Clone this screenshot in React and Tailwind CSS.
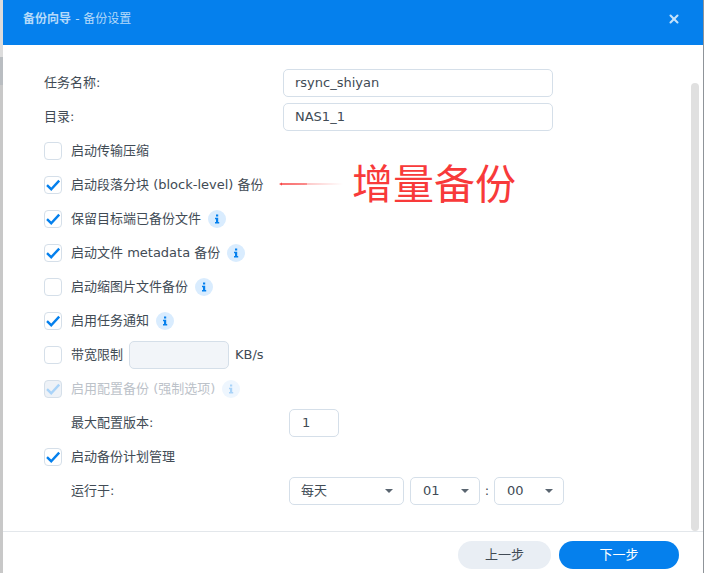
import { X } from 'lucide-react';

const FONT = { fontFamily: '"DejaVu Sans", "Noto Sans CJK SC", sans-serif' };

function Box({ checked, disabled }) {
  return (
    <span className={`flex h-[18px] w-[18px] shrink-0 items-center justify-center rounded-[4px] border ${disabled ? 'border-[#d5dfe9] bg-[#eef2f7]' : 'border-[#d5dfe9] bg-white'}`}>
      {checked && (
        <svg viewBox="0 0 16 16" className="h-[16px] w-[16px]">
          <path d="M2 8.2 6.2 12.2 14.2 3.6" fill="none" stroke={disabled ? '#a9d3f8' : '#0580ed'} strokeWidth="2.4" />
        </svg>
      )}
    </span>
  );
}

function Info({ faded }) {
  return (
    <span className={`ml-[7px] flex h-[18px] w-[18px] shrink-0 items-center justify-center rounded-full ${faded ? 'bg-[#eef6fe]' : 'bg-[#d9ecfe]'}`}>
      <svg viewBox="0 0 10 10" className="h-[10px] w-[10px]">
        <path d="M4 0.5h2.2v2H4zM3 3.8h3.2v4.2h1v1.5H3V8h1V5.2H3z" fill={faded ? '#a9d3f8' : '#0580ed'} />
      </svg>
    </span>
  );
}

function Row({ checked, disabled, info, children, after }) {
  return (
    <div className="flex h-[34px] items-center">
      <Box checked={checked} disabled={disabled} />
      <span className={`ml-[9px] whitespace-nowrap text-[13px] ${disabled ? 'text-[#bcc2c9]' : 'text-[#414b55]'}`}>{children}</span>
      {info && <Info faded={disabled} />}
      {after}
    </div>
  );
}

function Field({ label, value }) {
  return (
    <div className="flex h-[34px] items-center">
      <span className="w-[239px] text-[13px] text-[#414b55]">{label}</span>
      <div className="flex h-[28px] w-[270px] items-center rounded-[5px] border border-[#d5dfe9] px-[11px] text-[13px] text-[#414b55]">{value}</div>
    </div>
  );
}

function Select({ value, width, pad }) {
  return (
    <div className={`flex h-[28px] items-center justify-between rounded-[5px] border border-[#d5dfe9] pr-[10px] text-[13px] text-[#414b55] ${width} ${pad}`}>
      <span>{value}</span>
      <span className="h-0 w-0 border-x-[4px] border-t-[4px] border-x-transparent border-t-[#5a6570]" />
    </div>
  );
}

export default function App() {
  return (
    <div className="flex h-[573px] w-[704px] overflow-hidden bg-[#8f9499]" style={FONT}>
      <div className="flex h-full w-[3px] shrink-0 flex-col">
        <div className="h-[57px] bg-[#dcdcdc]" />
        <div className="h-[28px] bg-[#b9bdc1]" />
        <div className="flex-1 bg-[#c8c8c8]" />
      </div>
      <div className="flex h-full w-[700px] flex-col bg-white">
        <div className="flex h-[45px] shrink-0 items-start justify-between bg-[#0580ed] pl-[20px] pr-[22px] pt-[10px]">
          <span className="text-[12px] font-bold text-[#b5dafa]">
            备份向导 <span className="font-normal">- 备份设置</span>
          </span>
          <X className="mt-[2px] h-[14px] w-[14px] text-[#c5e2fb]" strokeWidth={3.5} />
        </div>

        <div className="relative h-[487px] shrink-0 border-b border-[#e3e7eb] pl-[41px] pt-[21px]">
          <Field label="任务名称:" value="rsync_shiyan" />
          <Field label="目录:" value="NAS1_1" />
          <Row>启动传输压缩</Row>
          <Row checked>启动段落分块 (block-level) 备份</Row>
          <Row checked info>保留目标端已备份文件</Row>
          <Row checked info>启动文件 metadata 备份</Row>
          <Row info>启动缩图片文件备份</Row>
          <Row checked info>启用任务通知</Row>
          <Row after={
            <>
              <div className="ml-[6px] h-[28px] w-[100px] rounded-[5px] border border-[#d5dfe9] bg-[#f2f5f9]" />
              <span className="ml-[6px] text-[13px] text-[#414b55]">KB/s</span>
            </>
          }>带宽限制</Row>
          <Row checked disabled info>启用配置备份 (强制选项)</Row>
          <div className="flex h-[34px] items-center pl-[27px]">
            <span className="w-[218px] text-[13px] text-[#414b55]">最大配置版本:</span>
            <div className="flex h-[28px] w-[50px] items-center rounded-[5px] border border-[#d5dfe9] px-[12px] text-[13px] text-[#414b55]">1</div>
          </div>
          <Row checked>启动备份计划管理</Row>
          <div className="flex h-[34px] items-center pl-[27px]">
            <span className="w-[218px] text-[13px] text-[#414b55]">运行于:</span>
            <Select value="每天" width="w-[115px]" pad="pl-[11px]" />
            <div className="ml-[6px]"><Select value="01" width="w-[70px]" pad="pl-[12px]" /></div>
            <span className="w-[14px] text-center text-[13px] text-[#414b55]">:</span>
            <Select value="00" width="w-[70px]" pad="pl-[12px]" />
          </div>

          <div className="absolute right-[4px] top-[38px] bottom-0 w-[8px] rounded-full bg-[#e0e0e0]" />
          <svg className="absolute left-[276px] top-[135px] h-[8px] w-[64px]" viewBox="0 0 64 8">
            <defs>
              <linearGradient id="arrow-fade" x1="0" x2="1" y1="0" y2="0">
                <stop offset="0" stopColor="#f73b3b" />
                <stop offset="1" stopColor="#f73b3b" stopOpacity="0" />
              </linearGradient>
            </defs>
            <path d="M0 4 3 2.5V3.2L28 3V5L3 4.8V5.5ZM28 3.5H64V4.5H28Z" fill="url(#arrow-fade)" />
          </svg>
          <span className="absolute left-[349px] top-[112px] text-[41px] leading-[56px] text-[#f83a3a]">增量备份</span>
        </div>

        <div className="flex flex-1 items-start justify-end gap-[8px] pr-[24px] pt-[9px]">
          <button className="h-[28px] w-[93px] rounded-full bg-[#e9eef4] text-[13px] text-[#414b55]">上一步</button>
          <button className="h-[28px] w-[120px] rounded-full bg-[#0580ed] text-[13px] text-white">下一步</button>
        </div>
      </div>
    </div>
  );
}
